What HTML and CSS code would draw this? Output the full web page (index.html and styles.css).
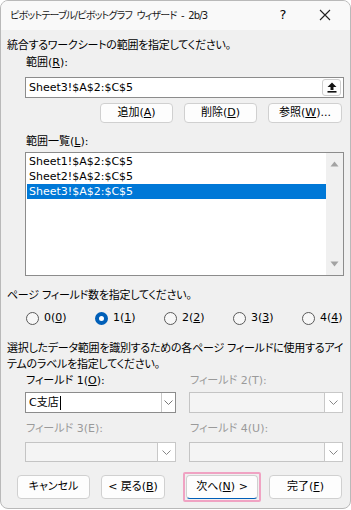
FILE: index.html
```html
<!doctype html>
<html lang="ja">
<head>
    <meta charset="UTF-8">
    <title>ピボットテーブル/ピボットグラフ ウィザード</title>
    <link rel="stylesheet" href="styles.css">
</head>
<body>
<div class="window">
    <div class="titlebar">
        <span class="title">ピボットテーブル/ピボットグラフ ウィザード - 2b/3</span>
        <span class="tb-btn help">?</span>
        <span class="tb-btn close">
            <svg width="12" height="12" viewBox="0 0 12 12"><path d="M1 1 L11 11 M11 1 L1 11" stroke="#222" stroke-width="1.1" fill="none"/></svg>
        </span>
    </div>

    <div class="content">
        <div class="text intro jp">統合するワークシートの範囲を指定してください。</div>
        <div class="text label">範囲(<u>R</u>):</div>

        <div class="range-input">
            <span class="range-value">Sheet3!$A$2:$C$5</span>
            <span class="collapse-btn">
                <svg width="10" height="11" viewBox="0 0 10 11"><path d="M5 0.5 L9.5 5 L6.5 5 L6.5 8 L3.5 8 L3.5 5 L0.5 5 Z" fill="#111"/><rect x="0.5" y="9" width="9" height="1.6" fill="#111"/></svg>
            </span>
        </div>

        <div class="btn-row">
            <span class="btn w73">追加(<u>A</u>)</span>
            <span class="btn w73">削除(<u>D</u>)</span>
            <span class="btn w74">参照(<u>W</u>)...</span>
        </div>

        <div class="text label list-label">範囲一覧(<u>L</u>):</div>

        <div class="listbox">
            <div class="list-items">
                <div class="item">Sheet1!$A$2:$C$5</div>
                <div class="item">Sheet2!$A$2:$C$5</div>
                <div class="item selected">Sheet3!$A$2:$C$5</div>
            </div>
            <div class="scrollbar">
                <svg width="9" height="6" viewBox="0 0 9 6"><path d="M0.5 5.5 L4.5 0.5 L8.5 5.5 Z" fill="#a3a3a3"/></svg>
                <svg width="9" height="6" viewBox="0 0 9 6"><path d="M0.5 0.5 L4.5 5.5 L8.5 0.5 Z" fill="#a3a3a3"/></svg>
            </div>
        </div>

        <div class="text page-count jp">ページ フィールド数を指定してください。</div>

        <div class="radio-row">
            <label class="radio"><span class="dot"></span><span>0(<u>0</u>)</span></label>
            <label class="radio"><span class="dot checked"></span><span>1(<u>1</u>)</span></label>
            <label class="radio"><span class="dot"></span><span>2(<u>2</u>)</span></label>
            <label class="radio"><span class="dot"></span><span>3(<u>3</u>)</span></label>
            <label class="radio"><span class="dot"></span><span>4(<u>4</u>)</span></label>
        </div>

        <div class="text desc jp">選択したデータ範囲を識別するための各ページ フィールドに使用するアイ<br>テムのラベルを指定してください。</div>

        <div class="fields">
            <div class="field">
                <div class="text">フィールド 1(<u>O</u>):</div>
                <div class="combo">
                    <span class="combo-value">C支店<span class="caret"></span></span>
                    <span class="combo-arrow">
                        <svg width="9" height="5" viewBox="0 0 9 5"><path d="M0.5 0.5 L4.5 4.5 L8.5 0.5" stroke="#777" fill="none"/></svg>
                    </span>
                </div>
            </div>
            <div class="field disabled">
                <div class="text">フィールド 2(T):</div>
                <div class="combo">
                    <span class="combo-value"></span>
                    <span class="combo-arrow boxed">
                        <svg width="9" height="5" viewBox="0 0 9 5"><path d="M0.5 0.5 L4.5 4.5 L8.5 0.5" stroke="#888" fill="none"/></svg>
                    </span>
                </div>
            </div>
            <div class="field disabled lower">
                <div class="text">フィールド 3(E):</div>
                <div class="combo">
                    <span class="combo-value"></span>
                    <span class="combo-arrow boxed">
                        <svg width="9" height="5" viewBox="0 0 9 5"><path d="M0.5 0.5 L4.5 4.5 L8.5 0.5" stroke="#888" fill="none"/></svg>
                    </span>
                </div>
            </div>
            <div class="field disabled lower">
                <div class="text">フィールド 4(U):</div>
                <div class="combo">
                    <span class="combo-value"></span>
                    <span class="combo-arrow boxed">
                        <svg width="9" height="5" viewBox="0 0 9 5"><path d="M0.5 0.5 L4.5 4.5 L8.5 0.5" stroke="#888" fill="none"/></svg>
                    </span>
                </div>
            </div>
        </div>

        <div class="footer">
            <span class="btn cancel">キャンセル</span>
            <span class="btn back">&lt; 戻る(<u>B</u>)</span>
            <span class="focus-ring"><span class="btn next">次へ(<u>N</u>) &gt;</span></span>
            <span class="btn finish">完了(<u>F</u>)</span>
        </div>
    </div>
</div>
</body>
</html>
```

FILE: styles.css
```css
html, body {
    margin: 0;
    padding: 0;
    background: #ffffff;
}

.window {
    width: 351px;
    height: 509px;
    box-sizing: border-box;
    border: 1px solid #b9b9b9;
    border-radius: 8px;
    background: #f0f0f0;
    overflow: hidden;
    font-family: "DejaVu Sans", "Noto Sans CJK JP", sans-serif;
    font-feature-settings: "palt";
    font-size: 11px;
    color: #000;
}

u {
    text-decoration-thickness: 1px;
    text-underline-offset: 1px;
}

/* 日本語の長い文は少し詰める */
.jp {
    letter-spacing: -0.25px;
}

/* タイトルバー */
.titlebar {
    height: 29px;
    background: #f9f9f9;
    display: flex;
    align-items: center;
    padding-left: 9px;
}

.title {
    flex: 1;
    color: #1a1a1a;
    margin-top: -2px;
    white-space: nowrap;
    font-size: 10px;
    letter-spacing: -0.8px;
    word-spacing: 2px;
}

.tb-btn {
    display: flex;
    justify-content: center;
    align-items: center;
    margin-top: -2px;
}

.help {
    width: 34px;
    font-size: 13px;
}

.close {
    width: 50px;
}

.content {
    padding: 0 6px 0 6px;
}

.text {
    line-height: 16px;
}

.intro {
    margin-top: 8px;
}

.label {
    margin-top: 1px;
    padding-left: 19px;
}

/* 範囲入力 */
.range-input {
    margin: 6px 0 0 18px;
    width: 319px;
    height: 21px;
    box-sizing: border-box;
    border: 1px solid #8c8c8c;
    background: #fff;
    display: flex;
    align-items: center;
    justify-content: space-between;
    padding: 0 2px 0 3px;
}

.range-value {
    line-height: 16px;
}

.collapse-btn {
    width: 19px;
    height: 17px;
    box-sizing: border-box;
    border: 1px solid #cfcfcf;
    border-radius: 3px;
    background: #fdfdfd;
    display: flex;
    justify-content: center;
    align-items: center;
}

.btn-row {
    margin-top: 5px;
    display: flex;
    justify-content: flex-end;
    gap: 11px;
    padding-right: 2px;
}

.btn {
    height: 20px;
    box-sizing: border-box;
    border: 1px solid #d0d0d0;
    border-radius: 4px;
    background: #fdfdfd;
    display: flex;
    justify-content: center;
    align-items: center;
    line-height: 16px;
}

.w73 { width: 73px; }
.w74 { width: 74px; }

.list-label {
    margin-top: 11px;
}

/* リストボックス */
.listbox {
    margin: 2px 0 0 18px;
    width: 319px;
    height: 124px;
    box-sizing: border-box;
    border: 1px solid #8c8c8c;
    background: #fff;
    display: flex;
}

.list-items {
    flex: 1;
    padding: 1px 0 0 1px;
}

.item {
    height: 15px;
    line-height: 15px;
    padding-left: 2px;
}

.item.selected {
    background: #0078d7;
    color: #fff;
}

.scrollbar {
    width: 17px;
    background: #f0f0f0;
    display: flex;
    flex-direction: column;
    justify-content: space-between;
    align-items: center;
    padding: 8px 0 8px 0;
    box-sizing: border-box;
}

.page-count {
    margin-top: 12px;
}

/* ラジオボタン */
.radio-row {
    margin: 6px 0 0 19px;
    display: grid;
    grid-template-columns: repeat(5, 69px);
    line-height: 16px;
}

.radio {
    display: flex;
    align-items: center;
    gap: 5px;
}

.dot {
    width: 13px;
    height: 13px;
    box-sizing: border-box;
    border: 1px solid #5a5a5a;
    border-radius: 50%;
    background: #f7f7f7;
}

.dot.checked {
    border: 4px solid #005fb8;
    background: #fff;
}

.desc {
    margin-top: 15px;
    white-space: nowrap;
}

/* ページフィールド */
.fields {
    display: grid;
    grid-template-columns: 151px 154px;
    column-gap: 13px;
    padding-left: 18px;
}

.field .text {
    padding-left: 1px;
}

.field.lower .text {
    margin-top: 8px;
}

.field.disabled .text {
    color: #9a9a9a;
}

.combo {
    margin-top: 3px;
    height: 21px;
    box-sizing: border-box;
    border: 1px solid #8c8c8c;
    background: #fff;
    display: flex;
}

.field.lower .combo {
    margin-top: 5px;
    height: 20px;
}

.field.disabled .combo {
    border-color: #c4c4c4;
    background: #f4f4f4;
}

.combo-value {
    flex: 1;
    padding-left: 3px;
    line-height: 19px;
    display: flex;
    align-items: center;
}

.caret {
    width: 1px;
    height: 14px;
    background: #000;
    margin-left: 1px;
}

.combo-arrow {
    width: 13px;
    border-left: 1px solid #c8c8c8;
    display: flex;
    justify-content: center;
    align-items: center;
}

.combo-arrow.boxed {
    width: 17px;
    border: 1px solid #c8c8c8;
    background: #fff;
    margin: -1px -1px -1px 0;
}

/* フッターボタン */
.footer {
    margin-top: 10px;
    display: flex;
    align-items: center;
    padding-left: 10px;
}

.footer .btn {
    height: 24px;
}

.cancel {
    width: 73px;
}

.back {
    width: 64px;
    margin-left: 11px;
}

.focus-ring {
    margin-left: 18px;
    border: 2px solid #f0a3c3;
    border-radius: 2px;
    padding: 1px;
}

.next {
    width: 72px;
    border-color: #d0d0d0 #d0d0d0 #005fb8 #d0d0d0 !important;
    border-bottom-width: 1px;
}

.finish {
    width: 73px;
    margin-left: 8px;
}
```
